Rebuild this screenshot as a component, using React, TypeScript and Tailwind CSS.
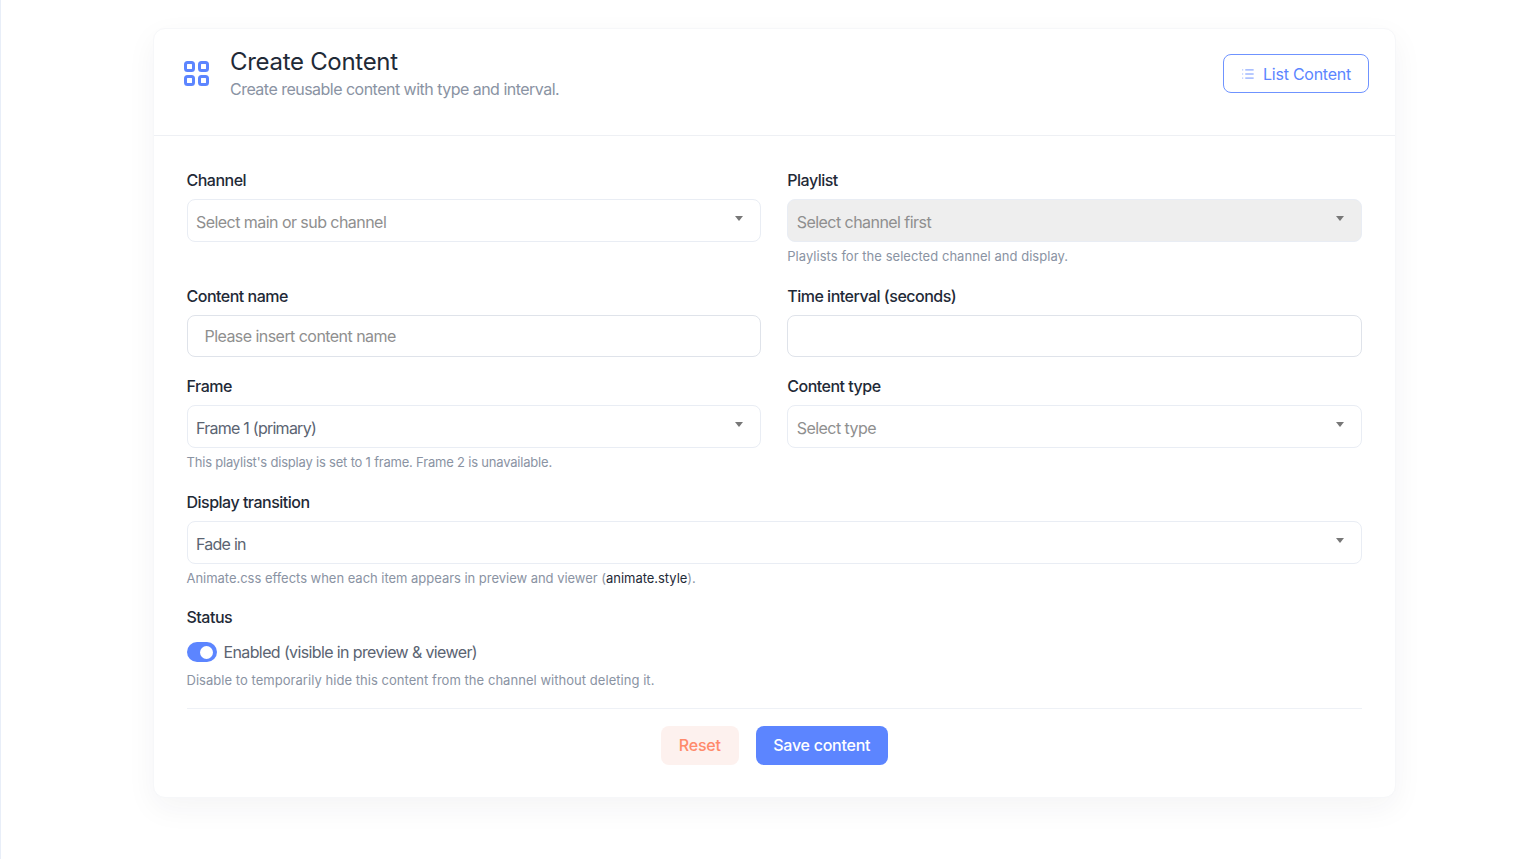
import { ReactNode } from "react";
import { List } from "lucide-react";

const Label = ({ children }: { children: ReactNode }) => (
  <div className="h-[19px] mb-[9px] text-[16px] leading-[19px] font-medium text-[#1f2a37] tracking-[-0.5px]">{children}</div>
);

const Help = ({ children, tracking = "tracking-[0.04px]" }: { children: ReactNode; tracking?: string }) => (
  <div className={`mt-[7px] h-[14px] text-[13px] leading-[14px] text-[#8a93a3] ${tracking}`}>{children}</div>
);

const Select = ({ text, muted = true, disabled = false }: { text: string; muted?: boolean; disabled?: boolean }) => (
  <div
    className={`h-[43px] rounded-[8px] border border-[#e9edf4] pl-[8.5px] pr-[17px] flex items-center justify-between text-[16px] ${
      disabled ? "bg-[#eeeeee]" : "bg-white"
    } ${muted ? "text-[#8f8f8f] tracking-[-0.55px]" : "text-[#5b6472] tracking-[-0.75px]"}`}
  >
    <span className="pt-[3px]">{text}</span>
    <span className="mb-[5px] w-0 h-0 border-x-[4px] border-x-transparent border-t-[5px] border-t-[#777777]" />
  </div>
);

const Input = ({ placeholder = "" }: { placeholder?: string }) => (
  <div className="h-[42px] rounded-[8px] border border-[#dfe3ea] bg-white px-[17px] flex items-center text-[16px] text-[#8f8f8f] tracking-[-0.55px]">
    {placeholder}
  </div>
);

export default function App() {
  return (
    <div className="min-h-[859px] bg-white border-l border-[#e8eef8] pt-[28px] font-['Inter',sans-serif]">
      <div className="ml-[152px] w-[1243px] h-[770px] bg-white rounded-[12px] border border-[#f6f7f9] shadow-[0_10px_30px_rgba(30,40,60,0.05)]">
        <div className="h-[107px] border-b border-[#eef0f4] pl-[30px] pr-[26px] flex items-start justify-between">
          <div className="flex items-start">
            <svg className="mt-[30px]" width="26" height="28" viewBox="0 0 26 28" fill="none" stroke="#5c85ff" strokeWidth="3">
              <rect x="1.5" y="3.5" width="8" height="8" rx="2" />
              <rect x="15.5" y="3.5" width="8" height="8" rx="2" />
              <rect x="1.5" y="17.5" width="8" height="8" rx="2" />
              <rect x="15.5" y="17.5" width="8" height="8" rx="2" />
            </svg>
            <div className="ml-[20px] mt-[17px]">
              <div className="text-[24px] leading-[32px] font-normal text-[#1f2a37] tracking-[-0.3px]">Create Content</div>
              <div className="mt-[1px] text-[16px] leading-[20px] text-[#8a93a3] tracking-[-0.52px]">Create reusable content with type and interval.</div>
            </div>
          </div>
          <div className="mt-[25px] w-[146px] h-[39px] rounded-[8px] border border-[#6f93ff] flex items-center justify-center gap-[8px] text-[16px] text-[#5c85ff] tracking-[-0.25px]">
            <List size={14} strokeWidth={1.5} />
            List Content
          </div>
        </div>

        <div className="pl-[32.5px] pr-[33px] pt-[35px]">
          <div className="grid grid-cols-2 gap-x-[26px]">
            <div className="h-[116px]">
              <Label>Channel</Label>
              <Select text="Select main or sub channel" />
            </div>
            <div className="h-[116px]">
              <Label>Playlist</Label>
              <Select text="Select channel first" disabled />
              <Help>Playlists for the selected channel and display.</Help>
            </div>
            <div className="h-[90px]">
              <Label>Content name</Label>
              <Input placeholder="Please insert content name" />
            </div>
            <div className="h-[90px]">
              <Label>Time interval (seconds)</Label>
              <Input />
            </div>
            <div className="h-[116px]">
              <Label>Frame</Label>
              <Select text="Frame 1 (primary)" muted={false} />
              <Help tracking="tracking-[-0.2px]">This playlist's display is set to 1 frame. Frame 2 is unavailable.</Help>
            </div>
            <div className="h-[116px]">
              <Label>Content type</Label>
              <Select text="Select type" />
            </div>
          </div>

          <div className="h-[115px]">
            <Label>Display transition</Label>
            <Select text="Fade in" muted={false} />
            <Help tracking="tracking-[-0.03px]">
              Animate.css effects when each item appears in preview and viewer (<span className="text-[#1f2a37]">animate.style</span>).
            </Help>
          </div>

          <Label>Status</Label>
          <div className="mt-[15px] flex items-center gap-[7px]">
            <div className="w-[30px] h-[20px] rounded-full bg-[#5c85ff] flex items-center justify-end pr-[4px]">
              <div className="w-[13px] h-[13px] rounded-full bg-white" />
            </div>
            <span className="h-[20px] text-[16px] leading-[21px] text-[#5b6472] tracking-[-0.62px]">Enabled (visible in preview &amp; viewer)</span>
          </div>
          <div className="mt-[11px] h-[14px] text-[13px] leading-[14px] text-[#8a93a3] tracking-[0.04px]">
            Disable to temporarily hide this content from the channel without deleting it.
          </div>

          <div className="mt-[21px] border-t border-[#eef1f6] pt-[17px] flex justify-center gap-[17px]">
            <div className="w-[78px] h-[39px] pb-[1px] rounded-[8px] bg-[#fdf1ee] flex items-center justify-center text-[16px] font-medium text-[#ff8a6b] tracking-[-0.2px]">
              Reset
            </div>
            <div className="w-[132px] h-[39px] pb-[1px] rounded-[8px] bg-[#5c85ff] flex items-center justify-center text-[16px] font-medium text-white tracking-[-0.25px]">
              Save content
            </div>
          </div>
        </div>
      </div>
    </div>
  );
}
